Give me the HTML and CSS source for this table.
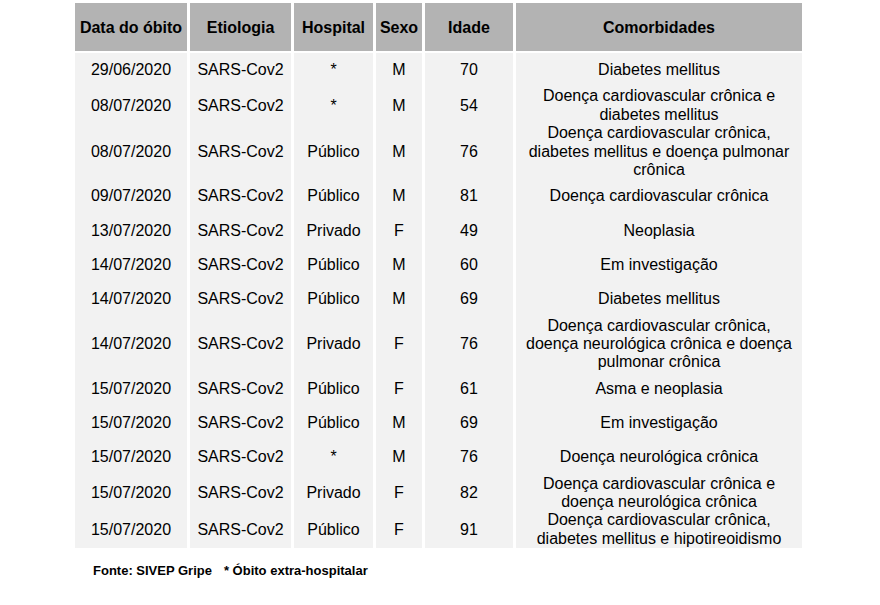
FILE: index.html
```html
<!DOCTYPE html>
<html lang="pt">
<head>
<meta charset="utf-8">
<title>Óbitos</title>
<link rel="stylesheet" href="styles.css">
</head>
<body>
<table class="obitos">
  <colgroup>
    <col class="c-data"><col class="c-etio"><col class="c-hosp"><col class="c-sexo"><col class="c-idade"><col class="c-comor">
  </colgroup>
  <thead>
    <tr><th>Data do óbito</th><th>Etiologia</th><th>Hospital</th><th>Sexo</th><th>Idade</th><th>Comorbidades</th></tr>
  </thead>
  <tbody>
    <tr><td>29/06/2020</td><td>SARS-Cov2</td><td>*</td><td>M</td><td>70</td><td>Diabetes mellitus</td></tr>
    <tr><td>08/07/2020</td><td>SARS-Cov2</td><td>*</td><td>M</td><td>54</td><td>Doença cardiovascular crônica e diabetes mellitus</td></tr>
    <tr><td>08/07/2020</td><td>SARS-Cov2</td><td>Público</td><td>M</td><td>76</td><td>Doença cardiovascular crônica, diabetes mellitus e doença pulmonar crônica</td></tr>
    <tr><td>09/07/2020</td><td>SARS-Cov2</td><td>Público</td><td>M</td><td>81</td><td>Doença cardiovascular crônica</td></tr>
    <tr><td>13/07/2020</td><td>SARS-Cov2</td><td>Privado</td><td>F</td><td>49</td><td>Neoplasia</td></tr>
    <tr><td>14/07/2020</td><td>SARS-Cov2</td><td>Público</td><td>M</td><td>60</td><td>Em investigação</td></tr>
    <tr><td>14/07/2020</td><td>SARS-Cov2</td><td>Público</td><td>M</td><td>69</td><td>Diabetes mellitus</td></tr>
    <tr><td>14/07/2020</td><td>SARS-Cov2</td><td>Privado</td><td>F</td><td>76</td><td>Doença cardiovascular crônica, doença neurológica crônica e doença pulmonar crônica</td></tr>
    <tr><td>15/07/2020</td><td>SARS-Cov2</td><td>Público</td><td>F</td><td>61</td><td>Asma e neoplasia</td></tr>
    <tr><td>15/07/2020</td><td>SARS-Cov2</td><td>Público</td><td>M</td><td>69</td><td>Em investigação</td></tr>
    <tr><td>15/07/2020</td><td>SARS-Cov2</td><td>*</td><td>M</td><td>76</td><td>Doença neurológica crônica</td></tr>
    <tr><td>15/07/2020</td><td>SARS-Cov2</td><td>Privado</td><td>F</td><td>82</td><td>Doença cardiovascular crônica e doença neurológica crônica</td></tr>
    <tr><td>15/07/2020</td><td>SARS-Cov2</td><td>Público</td><td>F</td><td>91</td><td>Doença cardiovascular crônica, diabetes mellitus e hipotireoidismo</td></tr>
  </tbody>
</table>
<p class="fonte"><span class="fonte-src">Fonte: SIVEP Gripe</span><span class="fonte-nota">* Óbito extra-hospitalar</span></p>
</body>
</html>
```

FILE: styles.css
```css
html, body {
  margin: 0;
  padding: 0;
  background: #ffffff;
}
body {
  font-family: "Liberation Sans", Arial, sans-serif;
  color: #000000;
}
.obitos {
  margin: 3px 0 0 72px;
  border-collapse: separate;
  border-spacing: 3px 0;
  table-layout: fixed;
  width: 733px;
  font-size: 16px;
}
.c-data { width: 112px; }
.c-etio { width: 101px; }
.c-hosp { width: 79px; }
.c-sexo { width: 46px; }
.c-idade { width: 88px; }
.c-comor { width: 286px; }

.obitos th {
  background: #b3b3b3;
  height: 46px;
  padding: 2px 0 0;
  font-weight: bold;
  text-align: center;
  vertical-align: middle;
  border-bottom: 2px solid #ffffff;
}
.obitos td {
  background: #f2f2f2;
  height: 34.3px;
  padding: 0 4px;
  text-align: center;
  vertical-align: middle;
  line-height: 18.4px;
}
.fonte {
  margin: 15px 0 0 93px;
  font-size: 13px;
  font-weight: bold;
  line-height: 15px;
}
.fonte-src {
  margin-right: 12px;
}
```
